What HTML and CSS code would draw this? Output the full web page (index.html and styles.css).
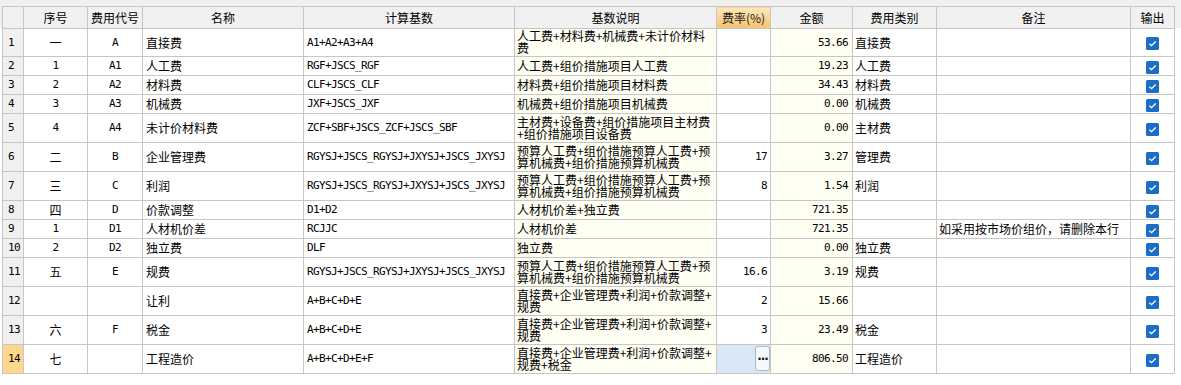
FILE: index.html
```html
<!DOCTYPE html>
<html lang="zh">
<head>
<meta charset="utf-8">
<link rel="stylesheet" href="styles.css">
</head>
<body>
<div class="frame">
<table class="grid">
<colgroup>
<col class="c-no"><col class="c-seq"><col class="c-code"><col class="c-name"><col class="c-base"><col class="c-desc"><col class="c-rate"><col class="c-amt"><col class="c-cat"><col class="c-note"><col class="c-out">
</colgroup>
<thead>
<tr class="hd">
<th></th><th>序号</th><th>费用代号</th><th>名称</th><th>计算基数</th><th>基数说明</th><th class="hd-rate">费率(%)</th><th>金额</th><th>费用类别</th><th>备注</th><th>输出</th>
</tr>
</thead>
<tbody>
<tr class="r1">
<td class="no">1</td><td class="seq">一</td><td class="code">A</td><td class="name">直接费</td><td class="base">A1+A2+A3+A4</td><td class="desc">人工费+材料费+机械费+未计价材料<br>费</td><td class="rate"></td><td class="amt">53.66</td><td class="cat">直接费</td><td class="note"></td><td class="out"><span class="chk"><svg width="13" height="13" viewBox="0 0 13 13"><rect width="13" height="13" rx="1.5" fill="#1c6dc6"/><polyline points="3.4,6.7 5.5,8.7 9.7,4.5" fill="none" stroke="#fff" stroke-width="1.3"/></svg></span></td>
</tr>
<tr class="s">
<td class="no">2</td><td class="seq mono">1</td><td class="code">A1</td><td class="name">人工费</td><td class="base">RGF+JSCS_RGF</td><td class="desc">人工费+组价措施项目人工费</td><td class="rate"></td><td class="amt">19.23</td><td class="cat">人工费</td><td class="note"></td><td class="out"><span class="chk"><svg width="13" height="13" viewBox="0 0 13 13"><rect width="13" height="13" rx="1.5" fill="#1c6dc6"/><polyline points="3.4,6.7 5.5,8.7 9.7,4.5" fill="none" stroke="#fff" stroke-width="1.3"/></svg></span></td>
</tr>
<tr class="s">
<td class="no">3</td><td class="seq mono">2</td><td class="code">A2</td><td class="name">材料费</td><td class="base">CLF+JSCS_CLF</td><td class="desc">材料费+组价措施项目材料费</td><td class="rate"></td><td class="amt">34.43</td><td class="cat">材料费</td><td class="note"></td><td class="out"><span class="chk"><svg width="13" height="13" viewBox="0 0 13 13"><rect width="13" height="13" rx="1.5" fill="#1c6dc6"/><polyline points="3.4,6.7 5.5,8.7 9.7,4.5" fill="none" stroke="#fff" stroke-width="1.3"/></svg></span></td>
</tr>
<tr class="s">
<td class="no">4</td><td class="seq mono">3</td><td class="code">A3</td><td class="name">机械费</td><td class="base">JXF+JSCS_JXF</td><td class="desc">机械费+组价措施项目机械费</td><td class="rate"></td><td class="amt">0.00</td><td class="cat">机械费</td><td class="note"></td><td class="out"><span class="chk"><svg width="13" height="13" viewBox="0 0 13 13"><rect width="13" height="13" rx="1.5" fill="#1c6dc6"/><polyline points="3.4,6.7 5.5,8.7 9.7,4.5" fill="none" stroke="#fff" stroke-width="1.3"/></svg></span></td>
</tr>
<tr class="t">
<td class="no">5</td><td class="seq mono">4</td><td class="code">A4</td><td class="name">未计价材料费</td><td class="base">ZCF+SBF+JSCS_ZCF+JSCS_SBF</td><td class="desc">主材费+设备费+组价措施项目主材费<br>+组价措施项目设备费</td><td class="rate"></td><td class="amt">0.00</td><td class="cat">主材费</td><td class="note"></td><td class="out"><span class="chk"><svg width="13" height="13" viewBox="0 0 13 13"><rect width="13" height="13" rx="1.5" fill="#1c6dc6"/><polyline points="3.4,6.7 5.5,8.7 9.7,4.5" fill="none" stroke="#fff" stroke-width="1.3"/></svg></span></td>
</tr>
<tr class="t">
<td class="no">6</td><td class="seq">二</td><td class="code">B</td><td class="name">企业管理费</td><td class="base">RGYSJ+JSCS_RGYSJ+JXYSJ+JSCS_JXYSJ</td><td class="desc">预算人工费+组价措施预算人工费+预<br>算机械费+组价措施预算机械费</td><td class="rate">17</td><td class="amt">3.27</td><td class="cat">管理费</td><td class="note"></td><td class="out"><span class="chk"><svg width="13" height="13" viewBox="0 0 13 13"><rect width="13" height="13" rx="1.5" fill="#1c6dc6"/><polyline points="3.4,6.7 5.5,8.7 9.7,4.5" fill="none" stroke="#fff" stroke-width="1.3"/></svg></span></td>
</tr>
<tr class="t">
<td class="no">7</td><td class="seq">三</td><td class="code">C</td><td class="name">利润</td><td class="base">RGYSJ+JSCS_RGYSJ+JXYSJ+JSCS_JXYSJ</td><td class="desc">预算人工费+组价措施预算人工费+预<br>算机械费+组价措施预算机械费</td><td class="rate">8</td><td class="amt">1.54</td><td class="cat">利润</td><td class="note"></td><td class="out"><span class="chk"><svg width="13" height="13" viewBox="0 0 13 13"><rect width="13" height="13" rx="1.5" fill="#1c6dc6"/><polyline points="3.4,6.7 5.5,8.7 9.7,4.5" fill="none" stroke="#fff" stroke-width="1.3"/></svg></span></td>
</tr>
<tr class="s">
<td class="no">8</td><td class="seq">四</td><td class="code">D</td><td class="name">价款调整</td><td class="base">D1+D2</td><td class="desc">人材机价差+独立费</td><td class="rate"></td><td class="amt">721.35</td><td class="cat"></td><td class="note"></td><td class="out"><span class="chk"><svg width="13" height="13" viewBox="0 0 13 13"><rect width="13" height="13" rx="1.5" fill="#1c6dc6"/><polyline points="3.4,6.7 5.5,8.7 9.7,4.5" fill="none" stroke="#fff" stroke-width="1.3"/></svg></span></td>
</tr>
<tr class="s">
<td class="no">9</td><td class="seq mono">1</td><td class="code">D1</td><td class="name">人材机价差</td><td class="base">RCJJC</td><td class="desc">人材机价差</td><td class="rate"></td><td class="amt">721.35</td><td class="cat"></td><td class="note">如采用按市场价组价，请删除本行</td><td class="out"><span class="chk"><svg width="13" height="13" viewBox="0 0 13 13"><rect width="13" height="13" rx="1.5" fill="#1c6dc6"/><polyline points="3.4,6.7 5.5,8.7 9.7,4.5" fill="none" stroke="#fff" stroke-width="1.3"/></svg></span></td>
</tr>
<tr class="s">
<td class="no">10</td><td class="seq mono">2</td><td class="code">D2</td><td class="name">独立费</td><td class="base">DLF</td><td class="desc">独立费</td><td class="rate"></td><td class="amt">0.00</td><td class="cat">独立费</td><td class="note"></td><td class="out"><span class="chk"><svg width="13" height="13" viewBox="0 0 13 13"><rect width="13" height="13" rx="1.5" fill="#1c6dc6"/><polyline points="3.4,6.7 5.5,8.7 9.7,4.5" fill="none" stroke="#fff" stroke-width="1.3"/></svg></span></td>
</tr>
<tr class="t">
<td class="no">11</td><td class="seq">五</td><td class="code">E</td><td class="name">规费</td><td class="base">RGYSJ+JSCS_RGYSJ+JXYSJ+JSCS_JXYSJ</td><td class="desc">预算人工费+组价措施预算人工费+预<br>算机械费+组价措施预算机械费</td><td class="rate">16.6</td><td class="amt">3.19</td><td class="cat">规费</td><td class="note"></td><td class="out"><span class="chk"><svg width="13" height="13" viewBox="0 0 13 13"><rect width="13" height="13" rx="1.5" fill="#1c6dc6"/><polyline points="3.4,6.7 5.5,8.7 9.7,4.5" fill="none" stroke="#fff" stroke-width="1.3"/></svg></span></td>
</tr>
<tr class="t">
<td class="no">12</td><td class="seq"></td><td class="code"></td><td class="name">让利</td><td class="base">A+B+C+D+E</td><td class="desc">直接费+企业管理费+利润+价款调整+<br>规费</td><td class="rate">2</td><td class="amt">15.66</td><td class="cat"></td><td class="note"></td><td class="out"><span class="chk"><svg width="13" height="13" viewBox="0 0 13 13"><rect width="13" height="13" rx="1.5" fill="#1c6dc6"/><polyline points="3.4,6.7 5.5,8.7 9.7,4.5" fill="none" stroke="#fff" stroke-width="1.3"/></svg></span></td>
</tr>
<tr class="t">
<td class="no">13</td><td class="seq">六</td><td class="code">F</td><td class="name">税金</td><td class="base">A+B+C+D+E</td><td class="desc">直接费+企业管理费+利润+价款调整+<br>规费</td><td class="rate">3</td><td class="amt">23.49</td><td class="cat">税金</td><td class="note"></td><td class="out"><span class="chk"><svg width="13" height="13" viewBox="0 0 13 13"><rect width="13" height="13" rx="1.5" fill="#1c6dc6"/><polyline points="3.4,6.7 5.5,8.7 9.7,4.5" fill="none" stroke="#fff" stroke-width="1.3"/></svg></span></td>
</tr>
<tr class="t">
<td class="no no-cur">14</td><td class="seq">七</td><td class="code"></td><td class="name">工程造价</td><td class="base">A+B+C+D+E+F</td><td class="desc">直接费+企业管理费+利润+价款调整+<br>规费+税金</td><td class="rate rate-edit"><span class="ellipsis">···</span></td><td class="amt">806.50</td><td class="cat">工程造价</td><td class="note"></td><td class="out"><span class="chk"><svg width="13" height="13" viewBox="0 0 13 13"><rect width="13" height="13" rx="1.5" fill="#1c6dc6"/><polyline points="3.4,6.7 5.5,8.7 9.7,4.5" fill="none" stroke="#fff" stroke-width="1.3"/></svg></span></td>
</tr>
</tbody>
</table>
</div>
</body>
</html>
```

FILE: styles.css
```css
html, body {
  margin: 0;
  padding: 0;
  background: #fff;
}
body {
  font-family: "Noto Sans CJK SC", "Noto Sans", sans-serif;
  font-size: 12px;
  color: #000;
}
.frame {
  height: 385px;
  box-sizing: border-box;
  padding: 6px 0 0 2px;
  background: linear-gradient(#f0f0f0 0, #f0f0f0 28px, #fff 28px);
}
.grid {
  border-collapse: collapse;
  table-layout: fixed;
  width: 1173px;
}
.c-no { width: 21px; }
.c-seq { width: 64px; }
.c-code { width: 55px; }
.c-name { width: 161px; }
.c-base { width: 211px; }
.c-desc { width: 202px; }
.c-rate { width: 54px; }
.c-amt { width: 82px; }
.c-cat { width: 84px; }
.c-note { width: 194px; }
.c-out { width: 44px; }

.grid th, .grid td {
  border: 1px solid #c6c6c6;
  padding: 0 3px;
  white-space: nowrap;
  overflow: hidden;
  line-height: 14px;
  vertical-align: middle;
}
.grid th {
  background: #f1f1f1;
  font-weight: normal;
  text-align: center;
  height: 21px;
  padding: 0;
}
.grid th.hd-rate {
  background: linear-gradient(#fde8bd, #f6c36c);
  color: #222;
}
tr.r1 { height: 28px; }
tr.s { height: 19px; }
tr.t { height: 29px; }

.mono, .no, .code, .base, .rate, .amt {
  font-family: "DejaVu Sans Mono", "Liberation Mono", monospace;
  font-size: 11px;
  letter-spacing: -0.62px;
}
.no {
  background: #f0f0f0;
  padding-left: 5px;
}
.grid td.no { padding-left: 5px; padding-right: 0; }
.no-cur {
  background: #ffd78c;
}
.seq, .code { text-align: center; }
.name { padding-left: 3px; }
.base { padding-left: 3px; }
.grid td.desc {
  background: #fefef3;
  line-height: 12px;
  padding: 0 0 1px 2px;
}
.rate { text-align: right; }
.grid td.rate { padding-right: 3px; }
.amt {
  text-align: right;
  background: #fefef3;
}
.grid td.amt { padding-right: 4px; }
.grid td.cat { padding-left: 2px; }
.grid td.note { padding-left: 2px; }
.out { text-align: center; }
.chk {
  display: inline-flex;
  vertical-align: middle;
}
.grid td.rate-edit {
  background: #dae8f6;
  padding: 1px 0 0 0;
  vertical-align: top;
  text-align: right;
}
.ellipsis {
  display: inline-flex;
  align-items: center;
  justify-content: center;
  width: 13px;
  height: 23px;
  border: 1px solid #a9b9cc;
  border-radius: 3px;
  background: #f5f9fd;
  font-family: "DejaVu Sans", sans-serif;
  font-weight: bold;
  font-size: 12px;
  letter-spacing: -1px;
  color: #111;
}
```
